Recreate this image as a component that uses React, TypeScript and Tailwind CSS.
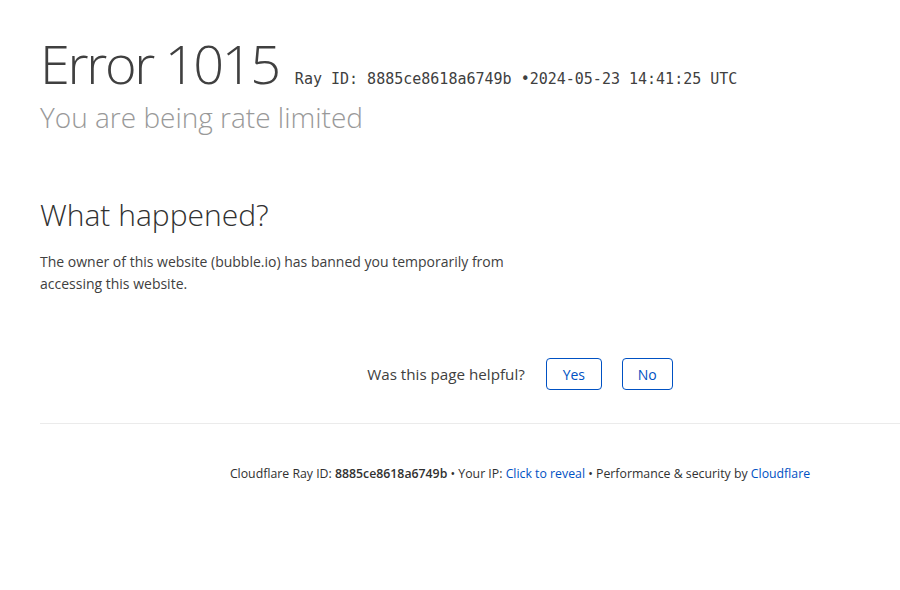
import React from "react";

export default function App() {
  const sans = { fontFamily: '"Open Sans", "Noto Sans", sans-serif' };
  return (
    <div className="w-full min-h-[590px] overflow-hidden bg-white" style={sans}>
      <div className="w-[960px] ml-10 pt-[33px]">
        <div className="flex items-baseline h-[60px]">
          <span className="text-[54px] leading-[60px] font-light text-[#404040] tracking-[-2.3px]">Error 1015</span>
          <span className="ml-[16px] text-[15px] text-[#404040]" style={{ fontFamily: '"DejaVu Sans Mono", monospace' }}>
            Ray ID: 8885ce8618a6749b •2024-05-23 14:41:25 UTC
          </span>
        </div>
        <div className="mt-[6px] text-[28px] leading-[36px] font-light text-[#999999]">You are being rate limited</div>

        <div className="mt-[60px] w-[480px]">
          <h2 className="text-[30px] leading-[40px] font-light text-[#313131]">What happened?</h2>
          <p className="mt-[16px] text-[14px] leading-[22px] text-[#404040]">
            The owner of this website (bubble.io) has banned you temporarily from accessing this website.
          </p>
        </div>

        <div className="mt-[63px] flex items-center justify-center gap-[21px] text-[#404040]">
          <span className="text-[15.2px]">Was this page helpful?</span>
          <div className="flex gap-5">
            <button className="w-[56px] h-[32px] border border-[#0051c3] rounded-[4px] text-[#0051c3] text-[14px]">Yes</button>
            <button className="w-[51px] h-[32px] border border-[#0051c3] rounded-[4px] text-[#0051c3] text-[14px]">No</button>
          </div>
        </div>

        <div className="mt-[33px] border-t border-[#ebebeb]" />

        <div className="mt-[41px] text-center text-[12.3px] leading-[18px] text-[#313131]">
          Cloudflare Ray ID: <span className="font-semibold">8885ce8618a6749b</span> • Your IP:{" "}
          <span className="text-[#0051c3]">Click to reveal</span> • Performance &amp; security by{" "}
          <span className="text-[#0051c3]">Cloudflare</span>
        </div>
      </div>
    </div>
  );
}
